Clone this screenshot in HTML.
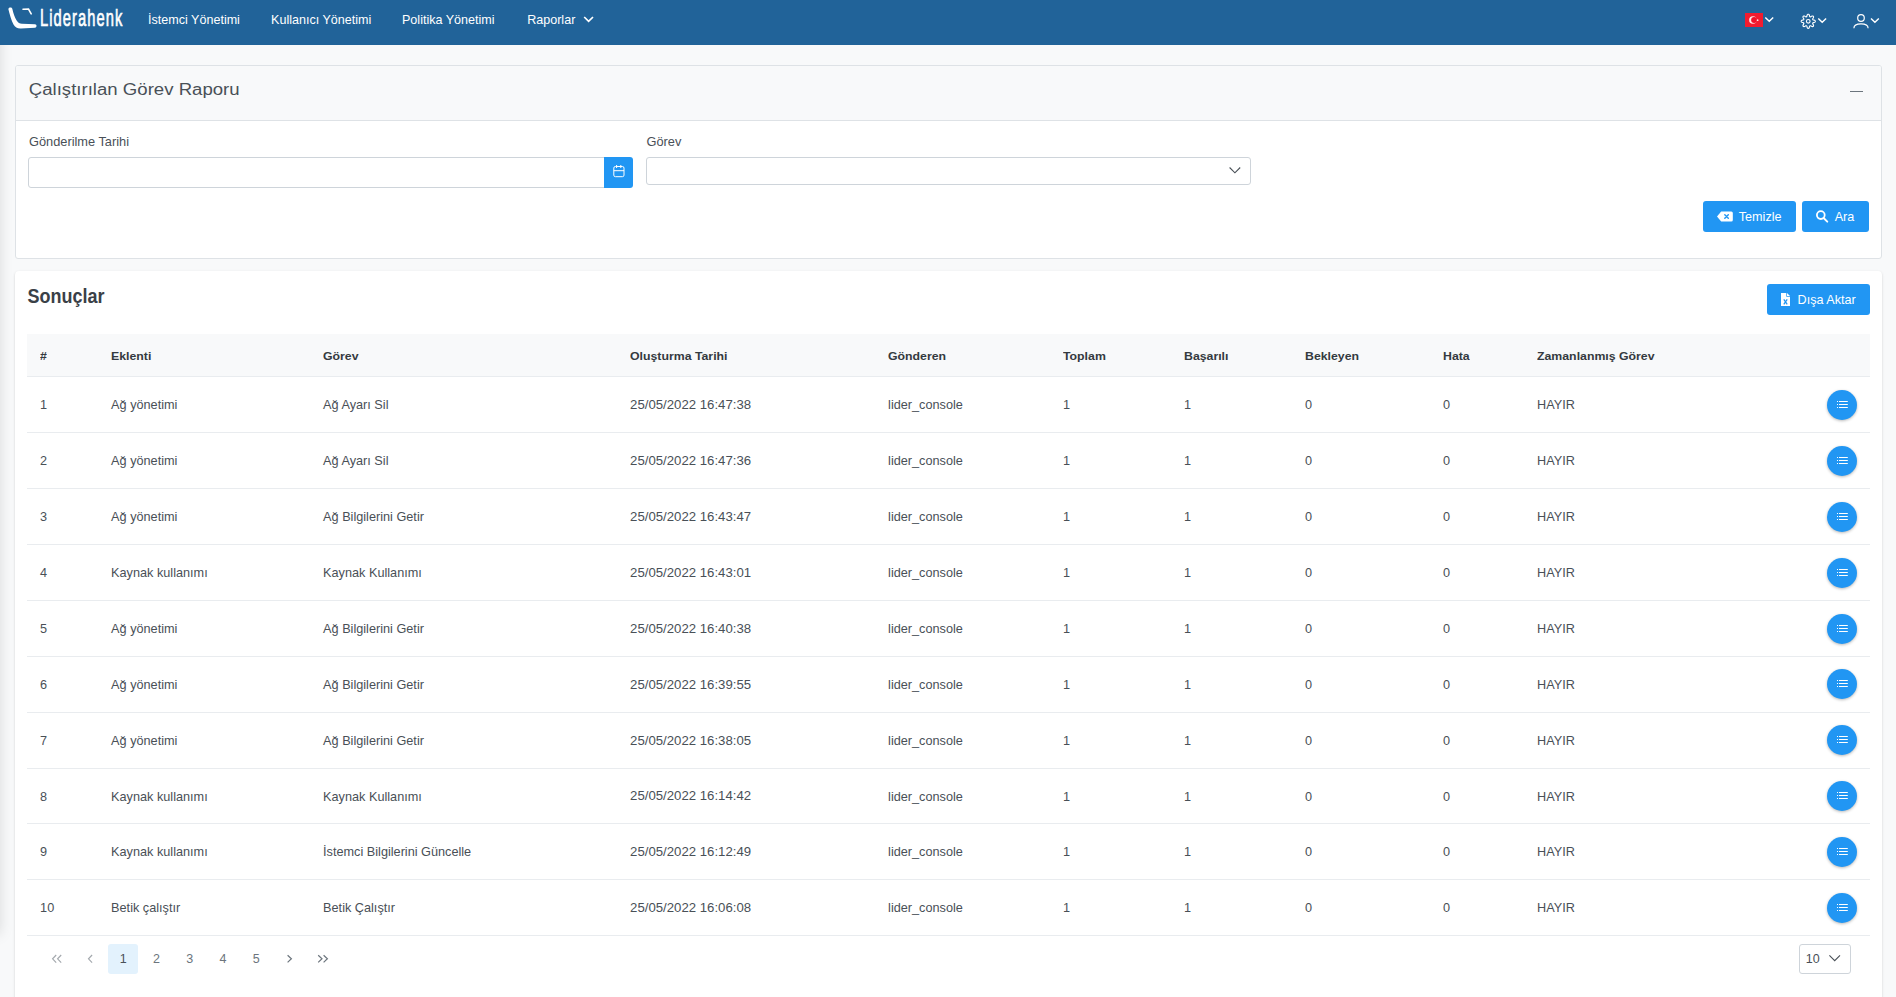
<!DOCTYPE html>
<html><head><meta charset="utf-8">
<style>
*{box-sizing:border-box;margin:0;padding:0}
html,body{width:1896px;height:997px;overflow:hidden}
body{background:#f8f9fa;font-family:"Liberation Sans",sans-serif;color:#495057;position:relative}
.abs{position:absolute}
.t{position:absolute;white-space:nowrap;line-height:1}
.rb{position:absolute;width:30px;height:30px;border-radius:50%;background:#2196f3;box-shadow:0 1px 3px rgba(0,0,0,.28)}
</style></head>
<body>
<div class="abs" style="left:-40px;top:30px;width:40px;height:904px;box-shadow:0 0 14px rgba(0,0,0,.13)"></div>
<div class="abs" style="left:0;top:0;width:1896px;height:44.5px;background:#216399"></div>
<svg class="abs" style="left:0;top:0" width="40" height="34" viewBox="0 0 40 34">
<path d="M8.4 9.2C8.2 7.2 11.8 6.6 12.3 8.8C13.3 13 14.5 17.5 16.8 20.8C18.2 22.8 19.5 23.8 22 23.8L35 24.3C37 24.4 37 27.6 35 27.7L21 28.6C17.5 28.8 15.2 27.5 13.5 24.5C11.5 20.5 9.5 14 8.4 9.2Z" fill="#fff"/>
<path d="M23 9.2L28.5 9L31.2 13.8" stroke="#fff" stroke-width="1.6" fill="none" stroke-linecap="round"/>
</svg>
<div class="t" style="left:40.00px;top:6.26px;font-size:24.5px;font-weight:400;color:#fff;transform:scaleX(0.6);transform-origin:0 0;letter-spacing:1.8px;-webkit-text-stroke:0.7px #fff">Liderahenk</div>
<div class="t" style="left:148.10px;top:13.68px;font-size:12.55px;font-weight:400;color:#fff;">İstemci Yönetimi</div>
<div class="t" style="left:271.10px;top:13.68px;font-size:12.55px;font-weight:400;color:#fff;">Kullanıcı Yönetimi</div>
<div class="t" style="left:402.00px;top:13.68px;font-size:12.55px;font-weight:400;color:#fff;">Politika Yönetimi</div>
<div class="t" style="left:527.20px;top:13.68px;font-size:12.55px;font-weight:400;color:#fff;">Raporlar</div>
<svg class="abs" style="left:580px;top:12px" width="16" height="14" viewBox="0 0 16 14"><path d="M4.2 5L8.6 9.4L13 5" stroke="#fff" stroke-width="1.7" fill="none"/></svg>
<div class="abs" style="left:15px;top:65px;width:1867px;height:194px;border:1px solid #dee2e6;border-radius:3px;background:#fff;overflow:hidden"><div class="abs" style="left:0;top:0;width:1867px;height:55px;background:#f8f9fa;border-bottom:1px solid #dee2e6"></div></div>
<div class="t" style="left:28.80px;top:79.86px;font-size:18.6px;font-weight:400;color:#495057;transform:scaleY(0.93);transform-origin:0 15.74px;">Çalıştırılan Görev Raporu</div>
<div class="abs" style="left:1849.5px;top:91px;width:13px;height:1.2px;background:#6c757d"></div>
<div class="t" style="left:29.00px;top:136.16px;font-size:12.8px;font-weight:400;color:#495057;">Gönderilme Tarihi</div>
<div class="abs" style="left:28px;top:157px;width:577px;height:31px;border:1px solid #ced4da;border-radius:3px 0 0 3px;background:#fff"></div>
<div class="abs" style="left:604px;top:157px;width:29px;height:31px;border-radius:0 3px 3px 0;background:#2196f3"></div>
<svg class="abs" style="left:604px;top:157px" width="29" height="31" viewBox="604 157 29 31"><rect x="613.8" y="166.5" width="10.2" height="10.2" rx="1.6" stroke="#fff" stroke-width="1" fill="none"/><line x1="613.8" y1="170.7" x2="624" y2="170.7" stroke="#fff" stroke-width="1"/><line x1="616.6" y1="165" x2="616.6" y2="168" stroke="#fff" stroke-width="1"/><line x1="620.8" y1="165" x2="620.8" y2="168" stroke="#fff" stroke-width="1"/></svg>
<div class="t" style="left:646.50px;top:136.16px;font-size:12.8px;font-weight:400;color:#495057;">Görev</div>
<div class="abs" style="left:646px;top:157px;width:605px;height:28px;border:1px solid #ced4da;border-radius:3px;background:#fff"></div>
<svg class="abs" style="left:1225px;top:162px" width="20" height="16" viewBox="1225 162 20 16"><path d="M1229.6 167.5L1234.9 172.8L1240.2 167.5" stroke="#495057" stroke-width="1.1" fill="none"/></svg>
<div class="abs" style="left:1703px;top:201px;width:93px;height:31px;border-radius:3px;background:#2196f3"></div>
<svg class="abs" style="left:1710px;top:205px" width="30" height="22" viewBox="1710 205 30 22"><path d="M1717 216.5L1721.2 211.5H1731.3Q1732.8 211.5 1732.8 213V220Q1732.8 221.5 1731.3 221.5H1721.2Z" fill="#fff"/><path d="M1724.8 214.7L1728.3 218.2M1728.3 214.7L1724.8 218.2" stroke="#2196f3" stroke-width="1.45" stroke-linecap="round"/></svg>
<div class="t" style="left:1738.80px;top:210.93px;font-size:12.6px;font-weight:400;color:#fff;">Temizle</div>
<div class="abs" style="left:1802px;top:201px;width:67px;height:31px;border-radius:3px;background:#2196f3"></div>
<svg class="abs" style="left:1810px;top:205px" width="24" height="22" viewBox="1810 205 24 22"><circle cx="1820.8" cy="215.1" r="3.9" stroke="#fff" stroke-width="1.8" fill="none"/><path d="M1823.6 218L1827.3 221.7" stroke="#fff" stroke-width="1.9" stroke-linecap="round"/></svg>
<div class="t" style="left:1834.70px;top:210.93px;font-size:12.6px;font-weight:400;color:#fff;">Ara</div>
<div class="abs" style="left:15px;top:271px;width:1867px;height:760px;background:#fff;border-radius:4px;box-shadow:0 2px 1px -1px rgba(0,0,0,.2),0 1px 1px 0 rgba(0,0,0,.14),0 1px 3px 0 rgba(0,0,0,.12)"></div>
<div class="t" style="left:27.50px;top:287.96px;font-size:18px;font-weight:700;color:#3a4047;transform:scaleY(1.09);transform-origin:0 15.24px;">Sonuçlar</div>
<div class="abs" style="left:1767px;top:284px;width:103px;height:31px;border-radius:3px;background:#2196f3"></div>
<svg class="abs" style="left:1776px;top:288px" width="20" height="22" viewBox="1776 288 20 22"><path d="M1781 293H1786.3V296.7H1790V306H1781Z" fill="#fff"/><path d="M1787 293L1790 296H1787Z" fill="#fff"/><path d="M1783.8 299.4L1787.2 304.3M1787.2 299.4L1783.8 304.3" stroke="#2196f3" stroke-width="1.25"/></svg>
<div class="t" style="left:1797.60px;top:294.03px;font-size:12.6px;font-weight:400;color:#fff;">Dışa Aktar</div>
<div class="abs" style="left:27px;top:334px;width:1843px;height:43px;background:#f8f9fa;border-bottom:1px solid #e9ecef"></div>
<div class="t" style="left:40.00px;top:349.69px;font-size:12.3px;font-weight:700;color:#343a40;transform:scaleY(0.94);transform-origin:0 10.41px;">#</div>
<div class="t" style="left:111.00px;top:349.69px;font-size:12.3px;font-weight:700;color:#343a40;transform:scaleY(0.94);transform-origin:0 10.41px;">Eklenti</div>
<div class="t" style="left:323.00px;top:349.69px;font-size:12.3px;font-weight:700;color:#343a40;transform:scaleY(0.94);transform-origin:0 10.41px;">Görev</div>
<div class="t" style="left:630.00px;top:349.69px;font-size:12.3px;font-weight:700;color:#343a40;transform:scaleY(0.94);transform-origin:0 10.41px;">Oluşturma Tarihi</div>
<div class="t" style="left:888.00px;top:349.69px;font-size:12.3px;font-weight:700;color:#343a40;transform:scaleY(0.94);transform-origin:0 10.41px;">Gönderen</div>
<div class="t" style="left:1063.00px;top:349.69px;font-size:12.3px;font-weight:700;color:#343a40;transform:scaleY(0.94);transform-origin:0 10.41px;">Toplam</div>
<div class="t" style="left:1184.00px;top:349.69px;font-size:12.3px;font-weight:700;color:#343a40;transform:scaleY(0.94);transform-origin:0 10.41px;">Başarılı</div>
<div class="t" style="left:1305.00px;top:349.69px;font-size:12.3px;font-weight:700;color:#343a40;transform:scaleY(0.94);transform-origin:0 10.41px;">Bekleyen</div>
<div class="t" style="left:1443.00px;top:349.69px;font-size:12.3px;font-weight:700;color:#343a40;transform:scaleY(0.94);transform-origin:0 10.41px;">Hata</div>
<div class="t" style="left:1537.00px;top:349.69px;font-size:12.3px;font-weight:700;color:#343a40;transform:scaleY(0.94);transform-origin:0 10.41px;">Zamanlanmış Görev</div>
<div class="t" style="left:40.10px;top:399.45px;font-size:12.7px;font-weight:400;color:#495057;">1</div>
<div class="t" style="left:111.10px;top:399.45px;font-size:12.7px;font-weight:400;color:#495057;">Ağ yönetimi</div>
<div class="t" style="left:323.10px;top:399.45px;font-size:12.7px;font-weight:400;color:#495057;">Ağ Ayarı Sil</div>
<div class="t" style="left:630.10px;top:398.23px;font-size:13.2px;font-weight:400;color:#495057;">25/05/2022 16:47:38</div>
<div class="t" style="left:888.10px;top:399.45px;font-size:12.7px;font-weight:400;color:#495057;">lider_console</div>
<div class="t" style="left:1063.10px;top:399.45px;font-size:12.7px;font-weight:400;color:#495057;">1</div>
<div class="t" style="left:1184.10px;top:399.45px;font-size:12.7px;font-weight:400;color:#495057;">1</div>
<div class="t" style="left:1305.10px;top:399.45px;font-size:12.7px;font-weight:400;color:#495057;">0</div>
<div class="t" style="left:1443.10px;top:399.45px;font-size:12.7px;font-weight:400;color:#495057;">0</div>
<div class="t" style="left:1537.10px;top:399.45px;font-size:12.7px;font-weight:400;color:#495057;">HAYIR</div>
<div class="abs" style="left:27px;top:432.00px;width:1843px;height:1px;background:#e9ecef"></div>
<div class="rb" style="left:1827px;top:390px"></div>
<svg class="abs" style="left:1827px;top:390px" width="30" height="30" viewBox="0 0 30 30"><g fill="#fff"><rect x="10" y="11" width="1" height="1"/><rect x="10" y="14" width="1" height="1"/><rect x="10" y="17" width="1" height="1"/><rect x="12" y="11" width="8.8" height="1"/><rect x="12" y="14" width="8.8" height="1"/><rect x="12" y="17" width="8.8" height="1"/></g></svg>
<div class="t" style="left:40.10px;top:455.33px;font-size:12.7px;font-weight:400;color:#495057;">2</div>
<div class="t" style="left:111.10px;top:455.33px;font-size:12.7px;font-weight:400;color:#495057;">Ağ yönetimi</div>
<div class="t" style="left:323.10px;top:455.33px;font-size:12.7px;font-weight:400;color:#495057;">Ağ Ayarı Sil</div>
<div class="t" style="left:630.10px;top:454.11px;font-size:13.2px;font-weight:400;color:#495057;">25/05/2022 16:47:36</div>
<div class="t" style="left:888.10px;top:455.33px;font-size:12.7px;font-weight:400;color:#495057;">lider_console</div>
<div class="t" style="left:1063.10px;top:455.33px;font-size:12.7px;font-weight:400;color:#495057;">1</div>
<div class="t" style="left:1184.10px;top:455.33px;font-size:12.7px;font-weight:400;color:#495057;">1</div>
<div class="t" style="left:1305.10px;top:455.33px;font-size:12.7px;font-weight:400;color:#495057;">0</div>
<div class="t" style="left:1443.10px;top:455.33px;font-size:12.7px;font-weight:400;color:#495057;">0</div>
<div class="t" style="left:1537.10px;top:455.33px;font-size:12.7px;font-weight:400;color:#495057;">HAYIR</div>
<div class="abs" style="left:27px;top:488.00px;width:1843px;height:1px;background:#e9ecef"></div>
<div class="rb" style="left:1827px;top:446px"></div>
<svg class="abs" style="left:1827px;top:446px" width="30" height="30" viewBox="0 0 30 30"><g fill="#fff"><rect x="10" y="11" width="1" height="1"/><rect x="10" y="14" width="1" height="1"/><rect x="10" y="17" width="1" height="1"/><rect x="12" y="11" width="8.8" height="1"/><rect x="12" y="14" width="8.8" height="1"/><rect x="12" y="17" width="8.8" height="1"/></g></svg>
<div class="t" style="left:40.10px;top:511.21px;font-size:12.7px;font-weight:400;color:#495057;">3</div>
<div class="t" style="left:111.10px;top:511.21px;font-size:12.7px;font-weight:400;color:#495057;">Ağ yönetimi</div>
<div class="t" style="left:323.10px;top:511.21px;font-size:12.7px;font-weight:400;color:#495057;">Ağ Bilgilerini Getir</div>
<div class="t" style="left:630.10px;top:509.99px;font-size:13.2px;font-weight:400;color:#495057;">25/05/2022 16:43:47</div>
<div class="t" style="left:888.10px;top:511.21px;font-size:12.7px;font-weight:400;color:#495057;">lider_console</div>
<div class="t" style="left:1063.10px;top:511.21px;font-size:12.7px;font-weight:400;color:#495057;">1</div>
<div class="t" style="left:1184.10px;top:511.21px;font-size:12.7px;font-weight:400;color:#495057;">1</div>
<div class="t" style="left:1305.10px;top:511.21px;font-size:12.7px;font-weight:400;color:#495057;">0</div>
<div class="t" style="left:1443.10px;top:511.21px;font-size:12.7px;font-weight:400;color:#495057;">0</div>
<div class="t" style="left:1537.10px;top:511.21px;font-size:12.7px;font-weight:400;color:#495057;">HAYIR</div>
<div class="abs" style="left:27px;top:544.00px;width:1843px;height:1px;background:#e9ecef"></div>
<div class="rb" style="left:1827px;top:502px"></div>
<svg class="abs" style="left:1827px;top:502px" width="30" height="30" viewBox="0 0 30 30"><g fill="#fff"><rect x="10" y="11" width="1" height="1"/><rect x="10" y="14" width="1" height="1"/><rect x="10" y="17" width="1" height="1"/><rect x="12" y="11" width="8.8" height="1"/><rect x="12" y="14" width="8.8" height="1"/><rect x="12" y="17" width="8.8" height="1"/></g></svg>
<div class="t" style="left:40.10px;top:567.09px;font-size:12.7px;font-weight:400;color:#495057;">4</div>
<div class="t" style="left:111.10px;top:567.09px;font-size:12.7px;font-weight:400;color:#495057;">Kaynak kullanımı</div>
<div class="t" style="left:323.10px;top:567.09px;font-size:12.7px;font-weight:400;color:#495057;">Kaynak Kullanımı</div>
<div class="t" style="left:630.10px;top:565.87px;font-size:13.2px;font-weight:400;color:#495057;">25/05/2022 16:43:01</div>
<div class="t" style="left:888.10px;top:567.09px;font-size:12.7px;font-weight:400;color:#495057;">lider_console</div>
<div class="t" style="left:1063.10px;top:567.09px;font-size:12.7px;font-weight:400;color:#495057;">1</div>
<div class="t" style="left:1184.10px;top:567.09px;font-size:12.7px;font-weight:400;color:#495057;">1</div>
<div class="t" style="left:1305.10px;top:567.09px;font-size:12.7px;font-weight:400;color:#495057;">0</div>
<div class="t" style="left:1443.10px;top:567.09px;font-size:12.7px;font-weight:400;color:#495057;">0</div>
<div class="t" style="left:1537.10px;top:567.09px;font-size:12.7px;font-weight:400;color:#495057;">HAYIR</div>
<div class="abs" style="left:27px;top:600.00px;width:1843px;height:1px;background:#e9ecef"></div>
<div class="rb" style="left:1827px;top:558px"></div>
<svg class="abs" style="left:1827px;top:558px" width="30" height="30" viewBox="0 0 30 30"><g fill="#fff"><rect x="10" y="11" width="1" height="1"/><rect x="10" y="14" width="1" height="1"/><rect x="10" y="17" width="1" height="1"/><rect x="12" y="11" width="8.8" height="1"/><rect x="12" y="14" width="8.8" height="1"/><rect x="12" y="17" width="8.8" height="1"/></g></svg>
<div class="t" style="left:40.10px;top:622.97px;font-size:12.7px;font-weight:400;color:#495057;">5</div>
<div class="t" style="left:111.10px;top:622.97px;font-size:12.7px;font-weight:400;color:#495057;">Ağ yönetimi</div>
<div class="t" style="left:323.10px;top:622.97px;font-size:12.7px;font-weight:400;color:#495057;">Ağ Bilgilerini Getir</div>
<div class="t" style="left:630.10px;top:621.75px;font-size:13.2px;font-weight:400;color:#495057;">25/05/2022 16:40:38</div>
<div class="t" style="left:888.10px;top:622.97px;font-size:12.7px;font-weight:400;color:#495057;">lider_console</div>
<div class="t" style="left:1063.10px;top:622.97px;font-size:12.7px;font-weight:400;color:#495057;">1</div>
<div class="t" style="left:1184.10px;top:622.97px;font-size:12.7px;font-weight:400;color:#495057;">1</div>
<div class="t" style="left:1305.10px;top:622.97px;font-size:12.7px;font-weight:400;color:#495057;">0</div>
<div class="t" style="left:1443.10px;top:622.97px;font-size:12.7px;font-weight:400;color:#495057;">0</div>
<div class="t" style="left:1537.10px;top:622.97px;font-size:12.7px;font-weight:400;color:#495057;">HAYIR</div>
<div class="abs" style="left:27px;top:656.00px;width:1843px;height:1px;background:#e9ecef"></div>
<div class="rb" style="left:1827px;top:614px"></div>
<svg class="abs" style="left:1827px;top:614px" width="30" height="30" viewBox="0 0 30 30"><g fill="#fff"><rect x="10" y="11" width="1" height="1"/><rect x="10" y="14" width="1" height="1"/><rect x="10" y="17" width="1" height="1"/><rect x="12" y="11" width="8.8" height="1"/><rect x="12" y="14" width="8.8" height="1"/><rect x="12" y="17" width="8.8" height="1"/></g></svg>
<div class="t" style="left:40.10px;top:678.85px;font-size:12.7px;font-weight:400;color:#495057;">6</div>
<div class="t" style="left:111.10px;top:678.85px;font-size:12.7px;font-weight:400;color:#495057;">Ağ yönetimi</div>
<div class="t" style="left:323.10px;top:678.85px;font-size:12.7px;font-weight:400;color:#495057;">Ağ Bilgilerini Getir</div>
<div class="t" style="left:630.10px;top:677.63px;font-size:13.2px;font-weight:400;color:#495057;">25/05/2022 16:39:55</div>
<div class="t" style="left:888.10px;top:678.85px;font-size:12.7px;font-weight:400;color:#495057;">lider_console</div>
<div class="t" style="left:1063.10px;top:678.85px;font-size:12.7px;font-weight:400;color:#495057;">1</div>
<div class="t" style="left:1184.10px;top:678.85px;font-size:12.7px;font-weight:400;color:#495057;">1</div>
<div class="t" style="left:1305.10px;top:678.85px;font-size:12.7px;font-weight:400;color:#495057;">0</div>
<div class="t" style="left:1443.10px;top:678.85px;font-size:12.7px;font-weight:400;color:#495057;">0</div>
<div class="t" style="left:1537.10px;top:678.85px;font-size:12.7px;font-weight:400;color:#495057;">HAYIR</div>
<div class="abs" style="left:27px;top:712.00px;width:1843px;height:1px;background:#e9ecef"></div>
<div class="rb" style="left:1827px;top:669px"></div>
<svg class="abs" style="left:1827px;top:669px" width="30" height="30" viewBox="0 0 30 30"><g fill="#fff"><rect x="10" y="11" width="1" height="1"/><rect x="10" y="14" width="1" height="1"/><rect x="10" y="17" width="1" height="1"/><rect x="12" y="11" width="8.8" height="1"/><rect x="12" y="14" width="8.8" height="1"/><rect x="12" y="17" width="8.8" height="1"/></g></svg>
<div class="t" style="left:40.10px;top:734.73px;font-size:12.7px;font-weight:400;color:#495057;">7</div>
<div class="t" style="left:111.10px;top:734.73px;font-size:12.7px;font-weight:400;color:#495057;">Ağ yönetimi</div>
<div class="t" style="left:323.10px;top:734.73px;font-size:12.7px;font-weight:400;color:#495057;">Ağ Bilgilerini Getir</div>
<div class="t" style="left:630.10px;top:733.51px;font-size:13.2px;font-weight:400;color:#495057;">25/05/2022 16:38:05</div>
<div class="t" style="left:888.10px;top:734.73px;font-size:12.7px;font-weight:400;color:#495057;">lider_console</div>
<div class="t" style="left:1063.10px;top:734.73px;font-size:12.7px;font-weight:400;color:#495057;">1</div>
<div class="t" style="left:1184.10px;top:734.73px;font-size:12.7px;font-weight:400;color:#495057;">1</div>
<div class="t" style="left:1305.10px;top:734.73px;font-size:12.7px;font-weight:400;color:#495057;">0</div>
<div class="t" style="left:1443.10px;top:734.73px;font-size:12.7px;font-weight:400;color:#495057;">0</div>
<div class="t" style="left:1537.10px;top:734.73px;font-size:12.7px;font-weight:400;color:#495057;">HAYIR</div>
<div class="abs" style="left:27px;top:768.00px;width:1843px;height:1px;background:#e9ecef"></div>
<div class="rb" style="left:1827px;top:725px"></div>
<svg class="abs" style="left:1827px;top:725px" width="30" height="30" viewBox="0 0 30 30"><g fill="#fff"><rect x="10" y="11" width="1" height="1"/><rect x="10" y="14" width="1" height="1"/><rect x="10" y="17" width="1" height="1"/><rect x="12" y="11" width="8.8" height="1"/><rect x="12" y="14" width="8.8" height="1"/><rect x="12" y="17" width="8.8" height="1"/></g></svg>
<div class="t" style="left:40.10px;top:790.61px;font-size:12.7px;font-weight:400;color:#495057;">8</div>
<div class="t" style="left:111.10px;top:790.61px;font-size:12.7px;font-weight:400;color:#495057;">Kaynak kullanımı</div>
<div class="t" style="left:323.10px;top:790.61px;font-size:12.7px;font-weight:400;color:#495057;">Kaynak Kullanımı</div>
<div class="t" style="left:630.10px;top:789.39px;font-size:13.2px;font-weight:400;color:#495057;">25/05/2022 16:14:42</div>
<div class="t" style="left:888.10px;top:790.61px;font-size:12.7px;font-weight:400;color:#495057;">lider_console</div>
<div class="t" style="left:1063.10px;top:790.61px;font-size:12.7px;font-weight:400;color:#495057;">1</div>
<div class="t" style="left:1184.10px;top:790.61px;font-size:12.7px;font-weight:400;color:#495057;">1</div>
<div class="t" style="left:1305.10px;top:790.61px;font-size:12.7px;font-weight:400;color:#495057;">0</div>
<div class="t" style="left:1443.10px;top:790.61px;font-size:12.7px;font-weight:400;color:#495057;">0</div>
<div class="t" style="left:1537.10px;top:790.61px;font-size:12.7px;font-weight:400;color:#495057;">HAYIR</div>
<div class="abs" style="left:27px;top:823.00px;width:1843px;height:1px;background:#e9ecef"></div>
<div class="rb" style="left:1827px;top:781px"></div>
<svg class="abs" style="left:1827px;top:781px" width="30" height="30" viewBox="0 0 30 30"><g fill="#fff"><rect x="10" y="11" width="1" height="1"/><rect x="10" y="14" width="1" height="1"/><rect x="10" y="17" width="1" height="1"/><rect x="12" y="11" width="8.8" height="1"/><rect x="12" y="14" width="8.8" height="1"/><rect x="12" y="17" width="8.8" height="1"/></g></svg>
<div class="t" style="left:40.10px;top:846.49px;font-size:12.7px;font-weight:400;color:#495057;">9</div>
<div class="t" style="left:111.10px;top:846.49px;font-size:12.7px;font-weight:400;color:#495057;">Kaynak kullanımı</div>
<div class="t" style="left:323.10px;top:846.49px;font-size:12.7px;font-weight:400;color:#495057;">İstemci Bilgilerini Güncelle</div>
<div class="t" style="left:630.10px;top:845.27px;font-size:13.2px;font-weight:400;color:#495057;">25/05/2022 16:12:49</div>
<div class="t" style="left:888.10px;top:846.49px;font-size:12.7px;font-weight:400;color:#495057;">lider_console</div>
<div class="t" style="left:1063.10px;top:846.49px;font-size:12.7px;font-weight:400;color:#495057;">1</div>
<div class="t" style="left:1184.10px;top:846.49px;font-size:12.7px;font-weight:400;color:#495057;">1</div>
<div class="t" style="left:1305.10px;top:846.49px;font-size:12.7px;font-weight:400;color:#495057;">0</div>
<div class="t" style="left:1443.10px;top:846.49px;font-size:12.7px;font-weight:400;color:#495057;">0</div>
<div class="t" style="left:1537.10px;top:846.49px;font-size:12.7px;font-weight:400;color:#495057;">HAYIR</div>
<div class="abs" style="left:27px;top:879.00px;width:1843px;height:1px;background:#e9ecef"></div>
<div class="rb" style="left:1827px;top:837px"></div>
<svg class="abs" style="left:1827px;top:837px" width="30" height="30" viewBox="0 0 30 30"><g fill="#fff"><rect x="10" y="11" width="1" height="1"/><rect x="10" y="14" width="1" height="1"/><rect x="10" y="17" width="1" height="1"/><rect x="12" y="11" width="8.8" height="1"/><rect x="12" y="14" width="8.8" height="1"/><rect x="12" y="17" width="8.8" height="1"/></g></svg>
<div class="t" style="left:40.10px;top:902.37px;font-size:12.7px;font-weight:400;color:#495057;">10</div>
<div class="t" style="left:111.10px;top:902.37px;font-size:12.7px;font-weight:400;color:#495057;">Betik çalıştır</div>
<div class="t" style="left:323.10px;top:902.37px;font-size:12.7px;font-weight:400;color:#495057;">Betik Çalıştır</div>
<div class="t" style="left:630.10px;top:901.15px;font-size:13.2px;font-weight:400;color:#495057;">25/05/2022 16:06:08</div>
<div class="t" style="left:888.10px;top:902.37px;font-size:12.7px;font-weight:400;color:#495057;">lider_console</div>
<div class="t" style="left:1063.10px;top:902.37px;font-size:12.7px;font-weight:400;color:#495057;">1</div>
<div class="t" style="left:1184.10px;top:902.37px;font-size:12.7px;font-weight:400;color:#495057;">1</div>
<div class="t" style="left:1305.10px;top:902.37px;font-size:12.7px;font-weight:400;color:#495057;">0</div>
<div class="t" style="left:1443.10px;top:902.37px;font-size:12.7px;font-weight:400;color:#495057;">0</div>
<div class="t" style="left:1537.10px;top:902.37px;font-size:12.7px;font-weight:400;color:#495057;">HAYIR</div>
<div class="abs" style="left:27px;top:935.00px;width:1843px;height:1px;background:#e9ecef"></div>
<div class="rb" style="left:1827px;top:893px"></div>
<svg class="abs" style="left:1827px;top:893px" width="30" height="30" viewBox="0 0 30 30"><g fill="#fff"><rect x="10" y="11" width="1" height="1"/><rect x="10" y="14" width="1" height="1"/><rect x="10" y="17" width="1" height="1"/><rect x="12" y="11" width="8.8" height="1"/><rect x="12" y="14" width="8.8" height="1"/><rect x="12" y="17" width="8.8" height="1"/></g></svg>
<div class="abs" style="left:108px;top:944px;width:30px;height:30px;border-radius:3px;background:#e3f2fd"></div>
<svg class="abs" style="left:40px;top:944px" width="300" height="30" viewBox="40 944 300 30"><g stroke="#a3a8ad" stroke-width="1.15" fill="none"><path d="M56.2 955L52.6 958.8L56.2 962.6M61.2 955L57.6 958.8L61.2 962.6"/><path d="M92.1 955L88.5 958.8L92.1 962.6"/></g><g stroke="#6c757d" stroke-width="1.2" fill="none"><path d="M287.6 955.2L291.4 958.8L287.6 962.4"/><path d="M318.2 955.2L322 958.8L318.2 962.4M323.6 955.2L327.4 958.8L323.6 962.4"/></g></svg>
<div class="t" style="left:119.70px;top:953.42px;font-size:12.5px;font-weight:400;color:#495057;">1</div>
<div class="t" style="left:153.10px;top:953.42px;font-size:12.5px;font-weight:400;color:#6c757d;">2</div>
<div class="t" style="left:186.30px;top:953.42px;font-size:12.5px;font-weight:400;color:#6c757d;">3</div>
<div class="t" style="left:219.60px;top:953.42px;font-size:12.5px;font-weight:400;color:#6c757d;">4</div>
<div class="t" style="left:252.80px;top:953.42px;font-size:12.5px;font-weight:400;color:#6c757d;">5</div>
<div class="abs" style="left:1799px;top:944px;width:52px;height:29.5px;border:1px solid #ced4da;border-radius:3px;background:#fff"></div>
<div class="t" style="left:1805.70px;top:953.42px;font-size:12.5px;font-weight:400;color:#495057;">10</div>
<svg class="abs" style="left:1825px;top:950px" width="20" height="16" viewBox="1825 950 20 16"><path d="M1829.4 955.4L1834.7 960.7L1840 955.4" stroke="#495057" stroke-width="1.1" fill="none"/></svg>
<svg class="abs" style="left:1740px;top:8px" width="45" height="26" viewBox="1740 8 45 26">
<rect x="1745" y="13" width="18" height="14" fill="#f21b2f"/>
<circle cx="1752.9" cy="20" r="3.8" fill="#fff" opacity=".9"/><circle cx="1754.1" cy="20" r="3.0" fill="#f01028"/>
<circle cx="1757.6" cy="20.2" r="0.9" fill="#fff" opacity=".9"/>
<path d="M1765.3 17.5L1769.25 21.3L1773.2 17.5" stroke="#fff" stroke-width="1.45" fill="none"/>
</svg>
<svg class="abs" style="left:1795px;top:8px" width="90" height="26" viewBox="1795 8 90 26">
<path d="M1808.25 14.20 L1808.53 14.25 L1808.79 14.38 L1809.04 14.60 L1809.26 14.92 L1809.41 15.46 L1809.52 16.01 L1809.65 16.34 L1809.78 16.58 L1809.93 16.76 L1810.09 16.87 L1810.28 16.90 L1810.50 16.88 L1810.77 16.80 L1811.09 16.66 L1811.56 16.35 L1812.04 16.08 L1812.42 16.00 L1812.76 16.02 L1813.04 16.12 L1813.27 16.28 L1813.43 16.51 L1813.53 16.79 L1813.55 17.13 L1813.47 17.51 L1813.20 17.99 L1812.89 18.46 L1812.75 18.78 L1812.67 19.05 L1812.65 19.27 L1812.68 19.46 L1812.79 19.62 L1812.97 19.77 L1813.21 19.90 L1813.54 20.03 L1814.09 20.14 L1814.63 20.29 L1814.95 20.51 L1815.17 20.76 L1815.30 21.02 L1815.35 21.30 L1815.30 21.58 L1815.17 21.84 L1814.95 22.09 L1814.63 22.31 L1814.09 22.46 L1813.54 22.57 L1813.21 22.70 L1812.97 22.83 L1812.79 22.98 L1812.68 23.14 L1812.65 23.33 L1812.67 23.55 L1812.75 23.82 L1812.89 24.14 L1813.20 24.61 L1813.47 25.09 L1813.55 25.47 L1813.53 25.81 L1813.43 26.09 L1813.27 26.32 L1813.04 26.48 L1812.76 26.58 L1812.42 26.60 L1812.04 26.52 L1811.56 26.25 L1811.09 25.94 L1810.77 25.80 L1810.50 25.72 L1810.28 25.70 L1810.09 25.73 L1809.93 25.84 L1809.78 26.02 L1809.65 26.26 L1809.52 26.59 L1809.41 27.14 L1809.26 27.68 L1809.04 28.00 L1808.79 28.22 L1808.53 28.35 L1808.25 28.40 L1807.97 28.35 L1807.71 28.22 L1807.46 28.00 L1807.24 27.68 L1807.09 27.14 L1806.98 26.59 L1806.85 26.26 L1806.72 26.02 L1806.57 25.84 L1806.41 25.73 L1806.22 25.70 L1806.00 25.72 L1805.73 25.80 L1805.41 25.94 L1804.94 26.25 L1804.46 26.52 L1804.08 26.60 L1803.74 26.58 L1803.46 26.48 L1803.23 26.32 L1803.07 26.09 L1802.97 25.81 L1802.95 25.47 L1803.03 25.09 L1803.30 24.61 L1803.61 24.14 L1803.75 23.82 L1803.83 23.55 L1803.85 23.33 L1803.82 23.14 L1803.71 22.98 L1803.53 22.83 L1803.29 22.70 L1802.96 22.57 L1802.41 22.46 L1801.87 22.31 L1801.55 22.09 L1801.33 21.84 L1801.20 21.58 L1801.15 21.30 L1801.20 21.02 L1801.33 20.76 L1801.55 20.51 L1801.87 20.29 L1802.41 20.14 L1802.96 20.03 L1803.29 19.90 L1803.53 19.77 L1803.71 19.62 L1803.82 19.46 L1803.85 19.27 L1803.83 19.05 L1803.75 18.78 L1803.61 18.46 L1803.30 17.99 L1803.03 17.51 L1802.95 17.13 L1802.97 16.79 L1803.07 16.51 L1803.23 16.28 L1803.46 16.12 L1803.74 16.02 L1804.08 16.00 L1804.46 16.08 L1804.94 16.35 L1805.41 16.66 L1805.73 16.80 L1806.00 16.88 L1806.22 16.90 L1806.41 16.87 L1806.57 16.76 L1806.72 16.58 L1806.85 16.34 L1806.98 16.01 L1807.09 15.46 L1807.24 14.92 L1807.46 14.60 L1807.71 14.38 L1807.97 14.25Z" stroke-linejoin="round" stroke="#fff" stroke-width="1.1" fill="none"/>
<circle cx="1808.25" cy="21.3" r="1.85" stroke="#fff" stroke-width="1.1" fill="none"/>
<path d="M1818.3 18.5L1822.2 22.3L1826.1 18.5" stroke="#fff" stroke-width="1.45" fill="none"/>
<circle cx="1861" cy="18" r="3.3" stroke="#fff" stroke-width="1.2" fill="none"/>
<path d="M1853.9 28.2C1853.9 25.2 1856.5 23.9 1861 23.9C1865.5 23.9 1868.1 25.2 1868.1 28.2" stroke="#fff" stroke-width="1.2" fill="none"/>
<path d="M1871 18.5L1874.9 22.3L1878.8 18.5" stroke="#fff" stroke-width="1.45" fill="none"/>
</svg>
</body></html>
